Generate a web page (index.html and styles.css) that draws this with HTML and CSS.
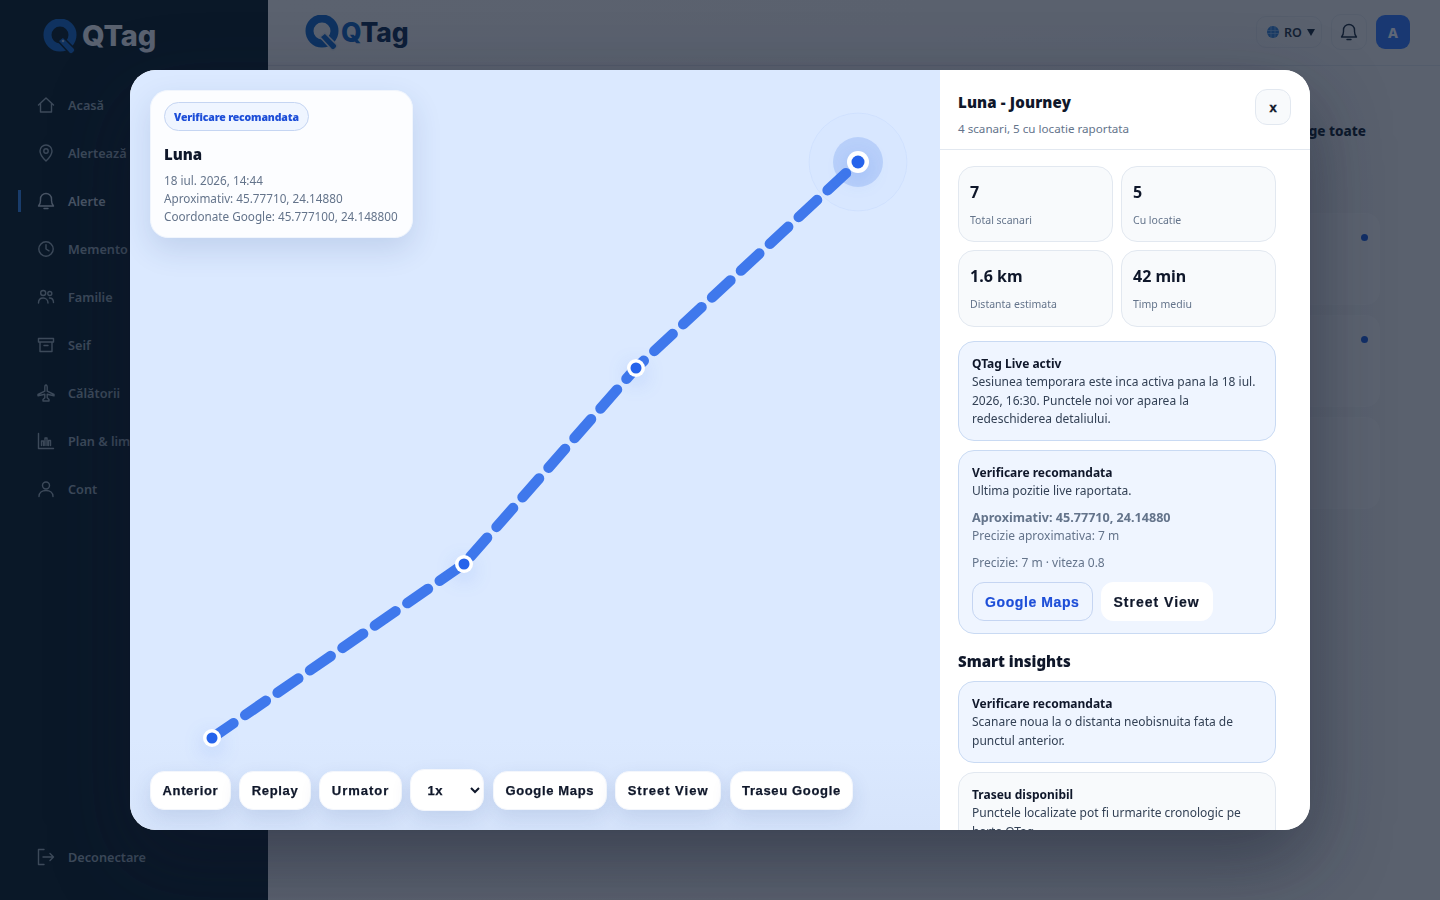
FILE: index.html
```html
<!DOCTYPE html>
<html lang="ro">
<head>
<meta charset="utf-8">
<title>QTag - Alerte</title>
<link rel="stylesheet" href="styles.css">
</head>
<body>
<div class="app">
  <aside class="sidebar">
    <div class="brand brand-side">
      <svg class="brand-mark" viewBox="0 0 36 36"><circle cx="17" cy="16" r="12.5" fill="none" stroke="#1060b8" stroke-width="8"/><path d="M15 22l5-4 11 11q2 2 0 4l-1 1q-2 2-4 0z" fill="#1060b8" stroke="#041c27" stroke-width="1.5"/><circle cx="20" cy="22" r="1.3" fill="#8fb0d8"/></svg>
      <span class="brand-text">QTag</span>
    </div>
    <nav class="nav">
      <a class="nav-item"><svg class="ico" viewBox="0 0 18 18"><path d="M1.5 9 9 2l7.500 7M3.500 7.500V16h11V7.500"/></svg><span>Acasă</span></a>
      <a class="nav-item"><svg class="ico" viewBox="0 0 18 18"><path d="M9 17s-6-5.500-6-10a6 6 0 0 1 12 0c0 4.500-6 10-6 10z"/><circle cx="9" cy="7" r="2.200"/></svg><span>Alertează</span></a>
      <a class="nav-item nav-active"><svg class="ico" viewBox="0 0 18 18"><path d="M1.500 14c1.500-1.500 2-3 2-5.500V7a5.500 5.500 0 0 1 11 0v1.500c0 2.500.5 4 2 5.500zM7 16.500h4"/></svg><span>Alerte</span></a>
      <a class="nav-item"><svg class="ico" viewBox="0 0 18 18"><circle cx="9" cy="9" r="7.200"/><path d="M9 4.800V9l3 1.800"/></svg><span>Memento</span></a>
      <a class="nav-item"><svg class="ico" viewBox="0 0 18 18"><circle cx="6.200" cy="5" r="2.500"/><circle cx="12.800" cy="5.500" r="2"/><path d="M1.500 15c0-3 2-5 4.700-5s4.800 2 4.800 5M12.500 10c2.400 0 4 1.800 4 4.500"/></svg><span>Familie</span></a>
      <a class="nav-item"><svg class="ico" viewBox="0 0 18 18"><path d="M1.500 2.500h15v3.500h-15zM3 6v9.500h12V6M7 9.500h4"/></svg><span>Seif</span></a>
      <a class="nav-item"><svg class="ico" viewBox="0 0 18 18"><path d="M9 1c-.8 0-1.200 1.200-1.200 2.500v3.700L1 10.500v1.300l6.800-1.500v3.400L6 15.500V17h6v-1.500l-1.800-1.800v-3.400l6.800 1.500v-1.300l-6.800-3.300V3.500C10.200 2.200 9.800 1 9 1z"/></svg><span>Călătorii</span></a>
      <a class="nav-item"><svg class="ico" viewBox="0 0 18 18"><path d="M1.500 1.500v15h15M4.500 13.500V9h2v4.500M8 13.500V6h2v7.500M11.500 13.500V8.500h2v5"/></svg><span>Plan &amp; limite</span></a>
      <a class="nav-item"><svg class="ico" viewBox="0 0 18 18"><circle cx="9" cy="5.500" r="3.500"/><path d="M2 16.500c0-3.800 3-6 7-6s7 2.200 7 6"/></svg><span>Cont</span></a>
    </nav>
    <a class="nav-item logout"><svg class="ico" viewBox="0 0 18 18"><path d="M7 1.500H1.500v15H7M6 9h10.500M13 5.500 16.500 9 13 12.500"/></svg><span>Deconectare</span></a>
  </aside>
  <main class="main">
    <header class="topbar">
      <div class="brand brand-top">
        <svg class="brand-mark" viewBox="0 0 36 36"><circle cx="17" cy="16" r="12.500" fill="none" stroke="#1060b8" stroke-width="8"/><path d="M15 22l5-4 11 11q2 2 0 4l-1 1q-2 2-4 0z" fill="#1060b8" stroke="#c8d0d8" stroke-width="1.500"/></svg>
        <span class="brand-text"><span class="brand-q">Q</span>Tag</span>
      </div>
      <div class="top-actions">
        <div class="lang"><svg class="globe" viewBox="0 0 12 12"><circle cx="6" cy="6" r="6" fill="#2f78c4"/><path d="M0 4.500h12M0 7.500h12M4 0v12M8 0v12" stroke="#7fb0e0" stroke-width=".7"/></svg>RO<span class="caret"></span></div>
        <div class="bell"><svg class="ico ico-dark" viewBox="0 0 18 18"><path d="M1.500 14c1.500-1.500 2-3 2-5.500V7a5.500 5.500 0 0 1 11 0v1.500c0 2.500.5 4 2 5.500zM7 16.500h4"/></svg></div>
        <div class="avatar">A</div>
      </div>
    </header>
    <section class="content">
      <div class="content-head"><button class="clear">Șterge toate</button></div>
      <div class="alert-card"><i class="dot"></i></div>
      <div class="alert-card"><i class="dot"></i></div>
      <div class="alert-card"></div>
    </section>
  </main>
</div>

<div class="overlay">
  <div class="modal">
    <div class="map">
      <svg class="route" viewBox="0 0 810 760">
        <circle class="halo-outer" cx="728" cy="92" r="49"/>
        <circle class="halo" cx="728" cy="92" r="25"/>
        <path class="line" d="M82 668 334 494 506 298 728 92"/>
        <g class="pin"><circle class="pin-bg" cx="82" cy="668" r="9"/><circle class="pin-dot" cx="82" cy="668" r="5.500"/></g>
        <g class="pin"><circle class="pin-bg" cx="334" cy="494" r="9"/><circle class="pin-dot" cx="334" cy="494" r="5.500"/></g>
        <g class="pin"><circle class="pin-bg" cx="506" cy="298" r="9"/><circle class="pin-dot" cx="506" cy="298" r="5.500"/></g>
        <g class="pin"><circle class="pin-bg" cx="728" cy="92" r="11"/><circle class="pin-dot" cx="728" cy="92" r="6.500"/></g>
      </svg>
      <div class="info-card">
        <span class="badge">Verificare recomandata</span>
        <h3 class="info-name">Luna</h3>
        <p class="info-meta">18 iul. 2026, 14:44<br>Aproximativ: 45.77710, 24.14880<br>Coordonate Google: 45.777100, 24.148800</p>
      </div>
      <div class="controls">
        <button class="ctl">Anterior</button>
        <button class="ctl">Replay</button>
        <button class="ctl ctl-wide">Urmator</button>
        <select class="ctl ctl-select"><option>1x</option><option>2x</option></select>
        <button class="ctl">Google Maps</button>
        <button class="ctl ctl-wide">Street View</button>
        <button class="ctl">Traseu Google</button>
      </div>
    </div>
    <div class="panel">
      <div class="panel-head">
        <div>
          <h2 class="panel-title">Luna - Journey</h2>
          <p class="panel-sub">4 scanari, 5 cu locatie raportata</p>
        </div>
        <button class="close">x</button>
      </div>
      <div class="panel-body">
        <div class="stats">
          <div class="stat"><b>7</b><span>Total scanari</span></div>
          <div class="stat"><b>5</b><span>Cu locatie</span></div>
          <div class="stat"><b>1.6 km</b><span>Distanta estimata</span></div>
          <div class="stat"><b>42 min</b><span>Timp mediu</span></div>
        </div>
        <div class="box box-blue box-live">
          <strong>QTag Live activ</strong>
          <p>Sesiunea temporara este inca activa pana la 18 iul. 2026, 16:30. Punctele noi vor aparea la redeschiderea detaliului.</p>
        </div>
        <div class="box box-blue box-verify">
          <strong>Verificare recomandata</strong>
          <p>Ultima pozitie live raportata.</p>
          <div class="coords"><b>Aproximativ: 45.77710, 24.14880</b><span>Precizie aproximativa: 7 m</span></div>
          <div class="precise">Precizie: 7 m · viteza 0.8</div>
          <div class="box-actions"><button class="act act-blue">Google Maps</button><button class="act act-wide">Street View</button></div>
        </div>
        <h3 class="insights">Smart insights</h3>
        <div class="box box-blue box-insight">
          <strong>Verificare recomandata</strong>
          <p>Scanare noua la o distanta neobisnuita fata de punctul anterior.</p>
        </div>
        <div class="box box-gray">
          <strong>Traseu disponibil</strong>
          <p>Punctele localizate pot fi urmarite cronologic pe harta QTag.</p>
        </div>
      </div>
    </div>
  </div>
</div>
</body>
</html>
```
FILE: styles.css
```css
* { box-sizing: border-box; }
html, body { margin: 0; height: 100%; overflow: hidden; }
body { font-family: "Noto Sans", sans-serif; color: #0f172a; background: #dde3e8; }
p, h2, h3 { margin: 0; }
button, select { font-family: "Liberation Sans", sans-serif; }

.app { display: flex; height: 900px; }

.sidebar { width: 268px; flex: none; background: #041c27; display: flex; flex-direction: column; padding: 18px 18px 25px 18px; }
.brand { display: flex; align-items: center; }
.brand-mark { width: 36px; height: 36px; flex: none; transform: translateY(1px); }
.brand-text { font-family: Inter, sans-serif; font-weight: 800; font-size: 29px; letter-spacing: -.2px; margin-left: 3px; line-height: 36px; }
.brand-side { padding-left: 25px; color: #d5dde3; }
.brand-top { color: #0b2c50; }
.brand-top .brand-text { font-size: 26.400px; margin-left: 0; }
.brand-q { color: #0f5cb0; }
.nav { margin-top: 27px; display: flex; flex-direction: column; flex: 1; }
.nav-item { height: 48px; display: flex; align-items: center; gap: 13px; padding-left: 19px; font-size: 12.700px; font-weight: 600; color: #889da8; border-left: 3px solid transparent; }
.nav-item .ico { margin-left: -3px; }
.nav-active { color: #a9bac5; position: relative; }
.nav-active::before { content: ""; position: absolute; left: -3px; top: 13px; width: 3px; height: 22px; background: #2a79d4; }
.ico { width: 18px; height: 18px; flex: none; fill: none; stroke: currentColor; stroke-width: 1.400; stroke-linecap: round; stroke-linejoin: round; }
.logout { height: 36px; }

.main { flex: 1; background: linear-gradient(100deg, #d8dcdf 0%, #d4dadd 100%); display: flex; flex-direction: column; }
.topbar { height: 66px; flex: none; display: flex; align-items: center; justify-content: space-between; padding: 0 30px 1px 37px; border-bottom: 1px solid #c3ccd4; }
.top-actions { display: flex; align-items: center; gap: 9px; }
.lang { height: 32px; width: 66px; padding-left: 10px; border: 1px solid #c8d0d6; border-radius: 10px; display: flex; align-items: center; gap: 5px; font-size: 12.500px; font-weight: 600; color: #1d3346; }
.globe { width: 12px; height: 12px; }
.caret { width: 0; height: 0; border-left: 4px solid transparent; border-right: 4px solid transparent; border-top: 7px solid #14283a; }
.bell { width: 36px; height: 36px; border: 1px solid #c8d0d6; border-radius: 10px; display: flex; align-items: center; justify-content: center; color: #14283a; }
.avatar { width: 34px; height: 34px; border-radius: 9px; background: #2a70e8; color: #e3ebf5; font-size: 14px; font-weight: 800; display: flex; align-items: center; justify-content: center; }

.content { padding: 50px 60px 0 32px; display: flex; flex-direction: column; }
.content-head { display: flex; justify-content: flex-end; padding-right: 14px; height: 97px; }
.clear { background: none; border: 0; padding: 0; height: 30px; font-family: "Noto Sans", sans-serif; font-weight: 800; font-size: 13.500px; color: #0b1d2e; }
.alert-card { height: 92px; margin-bottom: 10px; border: 1px solid #dbe0e3; border-radius: 14px; background: #dadfe2; position: relative; }
.dot { position: absolute; right: 11px; top: 20px; width: 7px; height: 7px; border-radius: 50%; background: #1958c8; }

.overlay { position: fixed; inset: 0; background: rgba(15, 23, 42, .62); backdrop-filter: blur(.7px); display: flex; align-items: center; justify-content: center; }
.modal { width: 1180px; height: 760px; border-radius: 26px; overflow: hidden; background: #fff; display: flex; box-shadow: 0 30px 80px rgba(15, 23, 42, .45); }

.map { width: 810px; flex: none; position: relative; background: linear-gradient(180deg, #dbe9ff 0%, #dbe9ff 88%, #d6e4fb 100%); }
.route { position: absolute; inset: 0; width: 810px; height: 760px; }
.line { fill: none; stroke: #3f78ec; stroke-width: 10.500; stroke-linecap: round; stroke-linejoin: round; stroke-dasharray: 25 14.400; stroke-dashoffset: -1; }
.halo-outer { fill: rgba(37, 99, 235, .015); stroke: rgba(37, 99, 235, .05); stroke-width: 1; }
.halo { fill: #b9d0fa; }
.pin { filter: drop-shadow(0 6px 10px rgba(37, 99, 235, .2)); }
.pin-bg { fill: #fff; }
.pin-dot { fill: #2563eb; }

.info-card { position: absolute; left: 20px; top: 20px; width: 263px; height: 148px; padding: 11px 13px; background: #fcfdff; border: 1px solid #f0f5fd; border-radius: 18px; box-shadow: 0 12px 30px rgba(30, 64, 130, .14); }
.badge { display: inline-flex; align-items: center; height: 29px; padding: 0 9px; border: 1px solid #c5d5f2; background: #eff5ff; border-radius: 15px; color: #1d4ed8; font-size: 10.500px; font-weight: 900; letter-spacing: -.15px; white-space: nowrap; }
.info-name { font-size: 15px; font-weight: 900; line-height: 20px; margin-top: 13px; color: #0f172a; }
.info-meta { font-size: 11.730px; line-height: 18px; color: #64748b; margin-top: 7px; white-space: nowrap; }

.controls { position: absolute; left: 20px; bottom: 19px; display: flex; align-items: center; gap: 8.500px; }
.ctl { height: 39px; padding: 0 11.500px; background: #fff; border: 1px solid #f3f6fc; border-radius: 14px; font-size: 13px; font-weight: 700; letter-spacing: .65px; color: #0f172a; -webkit-text-stroke: .25px #0f172a; box-shadow: 0 8px 20px rgba(30, 64, 130, .12); }
.ctl-wide { letter-spacing: 1px; }
.ctl-select { height: 42px; width: 74px; padding: 0 8px 0 12px; }

.panel { flex: 1; min-width: 0; display: flex; flex-direction: column; background: #fff; }
.panel-head { height: 80px; flex: none; padding: 19px 19px 0 18px; display: flex; justify-content: space-between; align-items: flex-start; border-bottom: 1px solid #e2e8f0; }
.panel-title { font-size: 15px; font-weight: 900; line-height: 20px; letter-spacing: .15px; color: #0f172a; margin-top: 3px; }
.panel-sub { font-size: 11.650px; line-height: 18px; color: #64748b; margin-top: 8px; }
.close { width: 36px; height: 36px; padding: 0; border: 1px solid #e2e8f0; border-radius: 12px; background: #f8fafc; font-weight: 700; font-size: 13px; color: #0f172a; -webkit-text-stroke: .4px #0f172a; }

.panel-body { flex: 1; min-height: 0; overflow: hidden; padding: 16px 34px 0 18px; }
.stats { display: grid; grid-template-columns: 155px 155px; grid-template-rows: 76px 77px; gap: 8px; }
.stat { padding: 13px 11px 0; background: #f8fafc; border: 1px solid #e2e8f0; border-radius: 16px; display: flex; flex-direction: column; }
.stat b { font-size: 16px; font-weight: 700; line-height: 24px; color: #0f172a; }
.stat span { font-size: 10.500px; line-height: 14px; margin-top: 9px; color: #64748b; }

.box { border-radius: 16px; padding: 13px; font-size: 12px; line-height: 18.500px; color: #334155; }
.box strong { display: block; font-size: 12px; font-weight: 700; line-height: 18px; color: #0f172a; }
.box-blue { background: #eff5ff; border: 1px solid #c9daf3; }
.box-gray { background: #f8fafc; border: 1px solid #e2e8f0; }
.box-live { height: 100px; margin-top: 14px; }
.box-verify { height: 184px; margin-top: 9px; }
.coords { margin-top: 8px; display: flex; flex-direction: column; color: #64748b; }
.coords span { color: #64748b; }
.coords b { font-weight: 700; font-size: 12.600px; }
.precise { margin-top: 8px; color: #64748b; }
.box-actions { display: flex; gap: 8px; margin-top: 10px; }
.act { height: 39px; padding: 0 12px; border: 1px solid #fff; border-radius: 12px; background: #fff; font-size: 14px; font-weight: 700; letter-spacing: .6px; color: #0f172a; -webkit-text-stroke: .2px currentColor; }
.act-wide { letter-spacing: 1px; }
.act-blue { background: #eff5ff; border-color: #c5d5f2; color: #1d4ed8; }
.insights { font-size: 15px; font-weight: 900; line-height: 20px; margin-top: 17px; color: #0f172a; }
.box-insight { height: 82px; margin-top: 10px; }
.box-gray { margin-top: 9px; height: 90px; }
```
